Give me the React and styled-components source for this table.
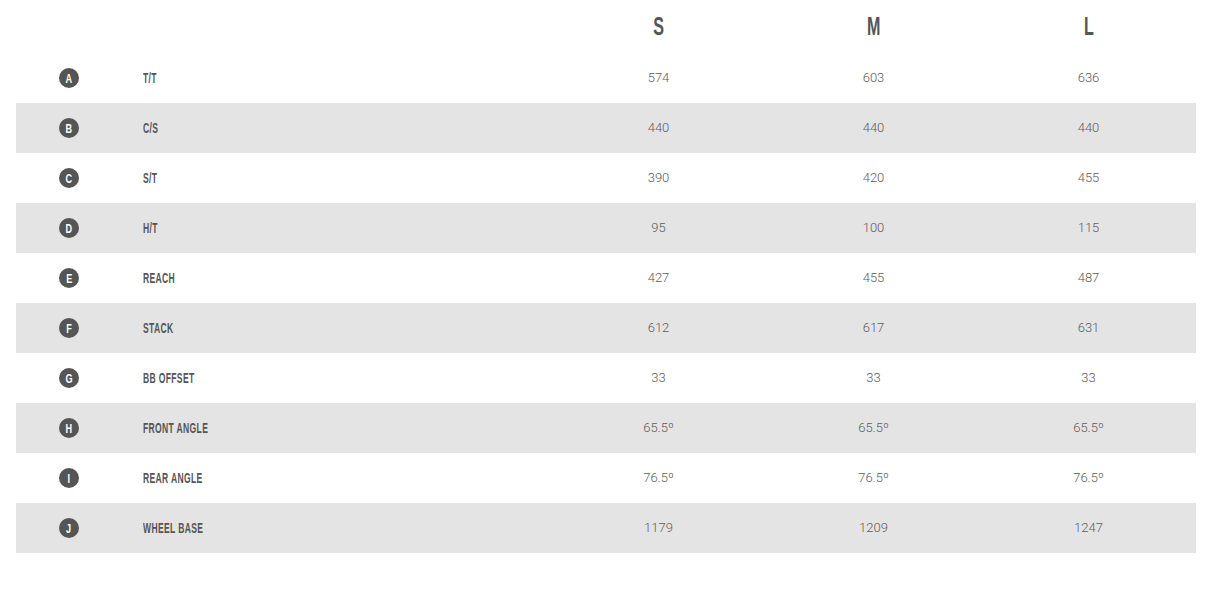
import React from "react";
import styled, { createGlobalStyle } from "styled-components";

const Global = createGlobalStyle`
  html, body { margin: 0; padding: 0; background: #fff; }
  body { font-family: Roboto, "Liberation Sans", sans-serif; }
`;

const Wrap = styled.div`
  padding: 0 30px 0 16px;
`;

const Table = styled.div`
  width: 1180px;
  display: flex;
  flex-direction: column;
`;

const Row = styled.div`
  display: grid;
  grid-template-columns: 106px 1fr 215px 215px 215px;
  align-items: center;
  height: ${(p) => (p.$header ? "53px" : "50px")};
  background: ${(p) => (p.$shaded ? "#e4e4e4" : "#fff")};
`;

const Condensed = styled.span`
  display: inline-block;
  font-family: "Liberation Sans", Arial, sans-serif;
  font-weight: 700;
  color: #555;
  transform: scaleX(${(p) => p.$sx || 0.57});
  transform-origin: ${(p) => p.$origin || "left"} center;
  white-space: nowrap;
`;

const HeadCell = styled.div`
  text-align: center;
  padding-bottom: 1px;
`;

const HeadText = styled(Condensed)`
  font-size: 26px;
  line-height: 1;
`;

const BadgeCell = styled.div`
  display: flex;
  justify-content: center;
`;

const Badge = styled.div`
  width: 20px;
  height: 20px;
  border-radius: 50%;
  background: #555;
  color: #fff;
  display: flex;
  align-items: center;
  justify-content: center;
  overflow: hidden;
`;

const BadgeText = styled(Condensed)`
  color: #fff;
  font-size: 13px;
  line-height: 1;
  transform-origin: center;
`;

const LabelCell = styled.div`
  padding-left: 21px;
  display: flex;
  align-items: center;
  margin-top: -2px;
`;

const LabelText = styled(Condensed)`
  font-size: 15px;
  line-height: 1;
  letter-spacing: 0.6px;
`;

const Value = styled.div`
  text-align: center;
  font-family: Roboto, "Liberation Sans", sans-serif;
  font-weight: 300;
  font-size: 13px;
  color: #5c5c5c;
  margin-top: -2px;
`;

const rows = [
  ["A", "T/T", "574", "603", "636"],
  ["B", "C/S", "440", "440", "440"],
  ["C", "S/T", "390", "420", "455"],
  ["D", "H/T", "95", "100", "115"],
  ["E", "REACH", "427", "455", "487"],
  ["F", "STACK", "612", "617", "631"],
  ["G", "BB OFFSET", "33", "33", "33"],
  ["H", "FRONT ANGLE", "65.5º", "65.5º", "65.5º"],
  ["I", "REAR ANGLE", "76.5º", "76.5º", "76.5º"],
  ["J", "WHEEL BASE", "1179", "1209", "1247"],
];

export default function App() {
  return (
    <Wrap>
      <Global />
      <Table>
        <Row $header>
          <div />
          <div />
          {["S", "M", "L"].map((s) => (
            <HeadCell key={s}>
              <HeadText $origin="center" $sx={0.62}>{s}</HeadText>
            </HeadCell>
          ))}
        </Row>
        {rows.map((r, i) => (
          <Row key={r[0]} $shaded={i % 2 === 1}>
            <BadgeCell>
              <Badge>
                <BadgeText $sx={0.7}>{r[0]}</BadgeText>
              </Badge>
            </BadgeCell>
            <LabelCell>
              <LabelText>{r[1]}</LabelText>
            </LabelCell>
            <Value>{r[2]}</Value>
            <Value>{r[3]}</Value>
            <Value>{r[4]}</Value>
          </Row>
        ))}
      </Table>
    </Wrap>
  );
}
